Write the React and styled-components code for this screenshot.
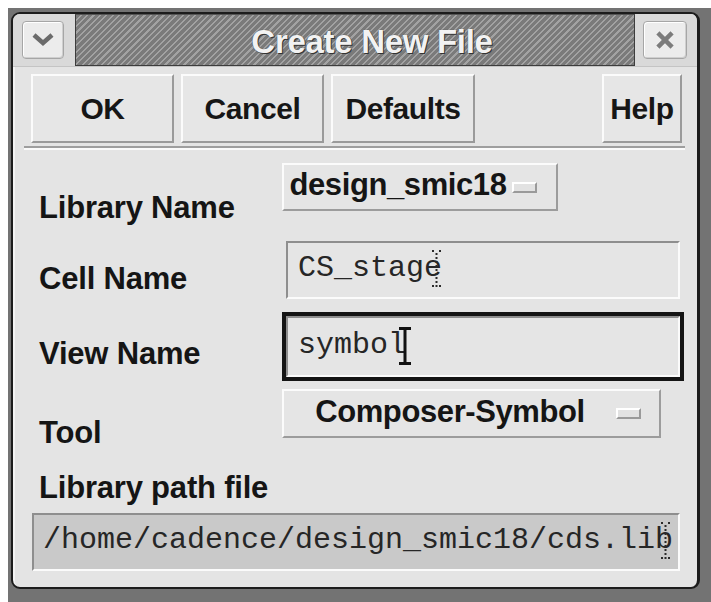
import React from 'react'
import styled, { createGlobalStyle } from 'styled-components'

const GlobalStyle = createGlobalStyle`
  html, body {
    margin: 0;
    padding: 0;
    background: #ffffff;
  }
  body {
    font-family: 'Liberation Sans', Arial, sans-serif;
  }
`

const Screen = styled.div`
  width: 711px;
  height: 602px;
  padding: 8px 0 0 8px;
  box-sizing: border-box;
  background: #ffffff;
  overflow: hidden;
`

const Backdrop = styled.div`
  width: 100%;
  height: 100%;
  padding: 4px 0 0 3px;
  box-sizing: border-box;
  background: #737373;
`

const Window = styled.div`
  width: 689px;
  height: 577px;
  box-sizing: border-box;
  border: 2px solid #1c1c1c;
  border-right-width: 3px;
  border-radius: 9px;
  background: #e4e4e4;
  box-shadow: inset 2px 2px 0 #f4f4f4;
  overflow: hidden;
  display: flex;
  flex-direction: column;
`

const TitleBar = styled.div`
  height: 52px;
  display: flex;
  align-items: stretch;
  background: #d9d9d9;
  border-bottom: 1px solid #c4c4c4;
`

const FrameCell = styled.div`
  width: ${({ $width }) => $width}px;
  display: flex;
  align-items: center;
  padding-left: ${({ $pad }) => $pad}px;
  box-sizing: border-box;
`

const FrameButton = styled.div`
  width: ${({ $width }) => $width}px;
  height: 38px;
  box-sizing: border-box;
  border: 1px solid #a6a6a6;
  border-radius: 4px;
  background: #ececec;
  box-shadow: inset 1px 1px 0 #ffffff, inset -1px -1px 0 #cfcfcf;
  display: flex;
  align-items: center;
  justify-content: center;
`

const Stripes = styled.div`
  flex: 1;
  box-sizing: border-box;
  border: 1px solid #3c3c3c;
  border-top-color: #555;
  background: repeating-linear-gradient(
    135deg,
    #7a7a7a 0px,
    #7a7a7a 3px,
    #a2a2a2 3px,
    #a2a2a2 4.5px
  );
  display: flex;
  align-items: center;
  justify-content: center;
  padding: 4px 0 0 34px;
`

const Title = styled.span`
  font-size: 33px;
  font-weight: bold;
  color: #f2f2f2;
  letter-spacing: -0.3px;
  text-shadow: 1px 1px 0 #333333, 0 0 1px #3a3a3a;
`

const ButtonBar = styled.div`
  display: flex;
  gap: 7px;
  margin: 0 12px 0 11px;
  padding: 7px 3px 3px 7px;
  border-bottom: 2px solid #9e9e9e;
  box-shadow: 0 2px 0 #fafafa;
`

const Button = styled.button`
  width: ${({ $width }) => $width}px;
  height: 69px;
  margin-left: ${({ $push }) => ($push ? 'auto' : '0')};
  padding: 0;
  box-sizing: border-box;
  border: 2px solid;
  border-color: #fbfbfb #9a9a9a #9a9a9a #fbfbfb;
  background: #e6e6e6;
  font-family: 'Liberation Sans', Arial, sans-serif;
  font-size: 30px;
  font-weight: bold;
  color: #161616;
  letter-spacing: -0.4px;
`

const Form = styled.div`
  display: flex;
  flex-direction: column;
  padding-left: 19px;
`

const Row = styled.div`
  display: flex;
  align-items: flex-start;
  margin-top: ${({ $top }) => $top}px;
`

const Label = styled.div`
  width: ${({ $width }) => ($width ? `${$width}px` : 'auto')};
  margin-top: ${({ $offset }) => $offset || 0}px;
  padding-left: 7px;
  box-sizing: border-box;
  font-size: 31px;
  line-height: 31px;
  font-weight: bold;
  color: #151515;
  letter-spacing: -0.2px;
  white-space: nowrap;
`

const Combo = styled.div`
  width: ${({ $width }) => $width}px;
  height: ${({ $height }) => $height}px;
  box-sizing: border-box;
  border: 2px solid;
  border-color: #fbfbfb #9c9c9c #9c9c9c #fbfbfb;
  background: #e5e5e5;
  display: flex;
  align-items: center;
  padding-right: ${({ $right }) => $right}px;
`

const ComboText = styled.span`
  flex: 1;
  text-align: center;
  font-size: 31px;
  font-weight: bold;
  color: #151515;
  letter-spacing: -0.4px;
  margin-top: -4px;
  white-space: nowrap;
`

const Indicator = styled.span`
  width: 25px;
  height: 11px;
  box-sizing: border-box;
  border: 2px solid;
  border-color: #ffffff #9a9a9a #9a9a9a #ffffff;
  background: #e2e2e2;
`

const FocusRing = styled.div`
  width: ${({ $width }) => $width}px;
  height: ${({ $height }) => $height}px;
  box-sizing: border-box;
  border: 4px solid #141414;
  display: flex;
`

const Field = styled.div`
  width: ${({ $width }) => ($width ? `${$width}px` : '100%')};
  height: ${({ $height }) => ($height ? `${$height}px` : '100%')};
  margin-left: ${({ $left }) => $left || 0}px;
  box-sizing: border-box;
  border: 2px solid;
  border-color: #8e8e8e #fbfbfb #fbfbfb #8e8e8e;
  background: ${({ $shade }) => ($shade ? '#c9c9c9' : '#e5e5e5')};
  display: flex;
  align-items: center;
  padding: 0 0 4px ${({ $pad }) => $pad || 10}px;
  overflow: hidden;
`

const FieldText = styled.span`
  font-family: 'Liberation Mono', 'DejaVu Sans Mono', monospace;
  font-size: 30px;
  color: #262626;
  white-space: nowrap;
`

const CursorSlot = styled.span`
  display: inline-flex;
  margin-left: ${({ $shift }) => $shift}px;
  margin-top: ${({ $drop }) => $drop || 0}px;
`

const DottedCursor = () => (
  <svg width="10" height="38" viewBox="0 0 10 38">
    <g fill="#2a2a2a">
      <rect x="0" y="0" width="2" height="2" />
      <rect x="7" y="0" width="2" height="2" />
      <rect x="3.5" y="3" width="2" height="2" />
      {[7, 11, 15, 19, 23, 27, 31].map((y) => (
        <rect key={y} x="3.5" y={y} width="2" height="2" />
      ))}
      <rect x="0" y="35" width="2" height="2" />
      <rect x="3.5" y="35" width="2" height="2" />
      <rect x="7" y="35" width="2" height="2" />
    </g>
  </svg>
)

const IBeam = () => (
  <svg width="13" height="38" viewBox="0 0 13 38">
    <g fill="#111">
      <rect x="0" y="0" width="12" height="3" />
      <rect x="4.5" y="0" width="3" height="38" />
      <rect x="0" y="35" width="12" height="3" />
    </g>
  </svg>
)

const Chevron = () => (
  <svg width="22" height="14" viewBox="0 0 22 14">
    <polyline
      points="2,2 11,10 20,2"
      fill="none"
      stroke="#6b6b6b"
      strokeWidth="4.5"
      strokeLinejoin="miter"
    />
  </svg>
)

const CloseMark = () => (
  <svg width="18" height="18" viewBox="0 0 18 18">
    <g stroke="#7c7c7c" strokeWidth="4.5" strokeLinecap="square">
      <line x1="3.5" y1="3.5" x2="14.5" y2="14.5" />
      <line x1="14.5" y1="3.5" x2="3.5" y2="14.5" />
    </g>
  </svg>
)

const App = () => {
  return (
    <>
      <GlobalStyle />
      <Screen>
        <Backdrop>
          <Window>
            <TitleBar>
              <FrameCell $width={62} $pad={9}>
                <FrameButton $width={42}>
                  <Chevron />
                </FrameButton>
              </FrameCell>
              <Stripes>
                <Title>Create New File</Title>
              </Stripes>
              <FrameCell $width={62} $pad={8}>
                <FrameButton $width={44}>
                  <CloseMark />
                </FrameButton>
              </FrameCell>
            </TitleBar>

            <ButtonBar>
              <Button $width={143}>OK</Button>
              <Button $width={143}>Cancel</Button>
              <Button $width={144}>Defaults</Button>
              <Button $width={80} $push>Help</Button>
            </ButtonBar>

            <Form>
              <Row $top={15}>
                <Label $width={250} $offset={29}>Library Name</Label>
                <Combo $width={276} $height={48} $right={19}>
                  <ComboText>design_smic18</ComboText>
                  <Indicator />
                </Combo>
              </Row>

              <Row $top={18}>
                <Label $width={250} $offset={22}>Cell Name</Label>
                <Field $width={394} $height={58} $left={4}>
                  <FieldText>CS_stage</FieldText>
                  <CursorSlot $shift={-10} $drop={2}>
                    <DottedCursor />
                  </CursorSlot>
                </Field>
              </Row>

              <Row $top={13}>
                <Label $width={250} $offset={26}>View Name</Label>
                <FocusRing $width={402} $height={69}>
                  <Field $pad={10}>
                    <FieldText>symbol</FieldText>
                    <CursorSlot $shift={-7} $drop={2}>
                      <IBeam />
                    </CursorSlot>
                  </Field>
                </FocusRing>
              </Row>

              <Row $top={8}>
                <Label $width={250} $offset={28}>Tool</Label>
                <Combo $width={379} $height={49} $right={18}>
                  <ComboText>Composer-Symbol</ComboText>
                  <Indicator />
                </Combo>
              </Row>

              <Row $top={24}>
                <Label>Library path file</Label>
              </Row>

              <Row $top={10}>
                <Field $width={648} $height={58} $shade $pad={9}>
                  <FieldText>/home/cadence/design_smic18/cds.lib</FieldText>
                  <CursorSlot $shift={-12} $drop={2}>
                    <DottedCursor />
                  </CursorSlot>
                </Field>
              </Row>
            </Form>
          </Window>
        </Backdrop>
      </Screen>
    </>
  )
}

export default App
